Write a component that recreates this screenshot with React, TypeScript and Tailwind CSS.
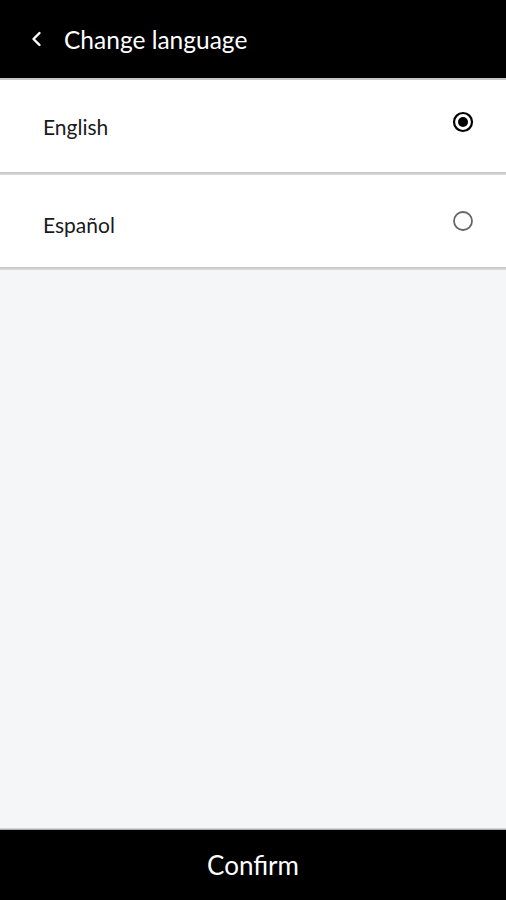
import { useState } from 'react';

const languages = [
  { name: 'English', text: 'mt-0', radio: '-mt-[8px]' },
  { name: 'Español', text: 'mt-[6px]', radio: '-mt-[1px]' },
];

function Radio({ checked }: { checked: boolean }) {
  return (
    <svg width="22" height="22" viewBox="0 0 22 22" aria-hidden>
      <circle cx="11" cy="11" r="9" fill="none" stroke={checked ? '#000' : '#666'} strokeWidth={checked ? 2.2 : 1.8} />
      {checked && <circle cx="11" cy="11" r="5" fill="#000" />}
    </svg>
  );
}

export default function App() {
  const [selected, setSelected] = useState('English');

  return (
    <div className="flex h-[900px] w-[506px] flex-col bg-[#f5f6f8] font-['Lato','Liberation_Sans',sans-serif]">
      {/* Header */}
      <div className="flex h-[78px] items-center bg-black pl-[28px] text-white">
        <svg width="18" height="18" viewBox="0 0 18 18" fill="none" aria-hidden>
          <path d="M11.5 3 L5.5 9 L11.5 15" stroke="#fff" strokeWidth="2.4" strokeLinecap="round" strokeLinejoin="round" />
        </svg>
        <span className="ml-[18px] mt-[2px] text-[24.5px] leading-none">Change language</span>
      </div>
      <div className="h-[2px] bg-[#c8c8c8]" />

      {/* Options */}
      {languages.map((lang) => (
        <div key={lang.name}>
          <button
            onClick={() => setSelected(lang.name)}
            className="flex h-[92px] w-full items-center justify-between bg-white pl-[43px] pr-[32px] text-left"
          >
            <span className={`text-[21px] leading-none text-[#1a1a1a] ${lang.text}`}>{lang.name}</span>
            <span className={lang.radio}>
              <Radio checked={selected === lang.name} />
            </span>
          </button>
          <div className="h-[3px] bg-gradient-to-b from-[#c4c4c4] to-[#dcdcdc]" />
        </div>
      ))}

      <div className="flex-1" />

      {/* Footer */}
      <div className="h-[2px] bg-gradient-to-b from-[#e8e8e8] to-[#9a9a9a]" />
      <button className="flex h-[70px] w-full items-center justify-center bg-black text-[26px] leading-none text-white">
        Confirm
      </button>
    </div>
  );
}
